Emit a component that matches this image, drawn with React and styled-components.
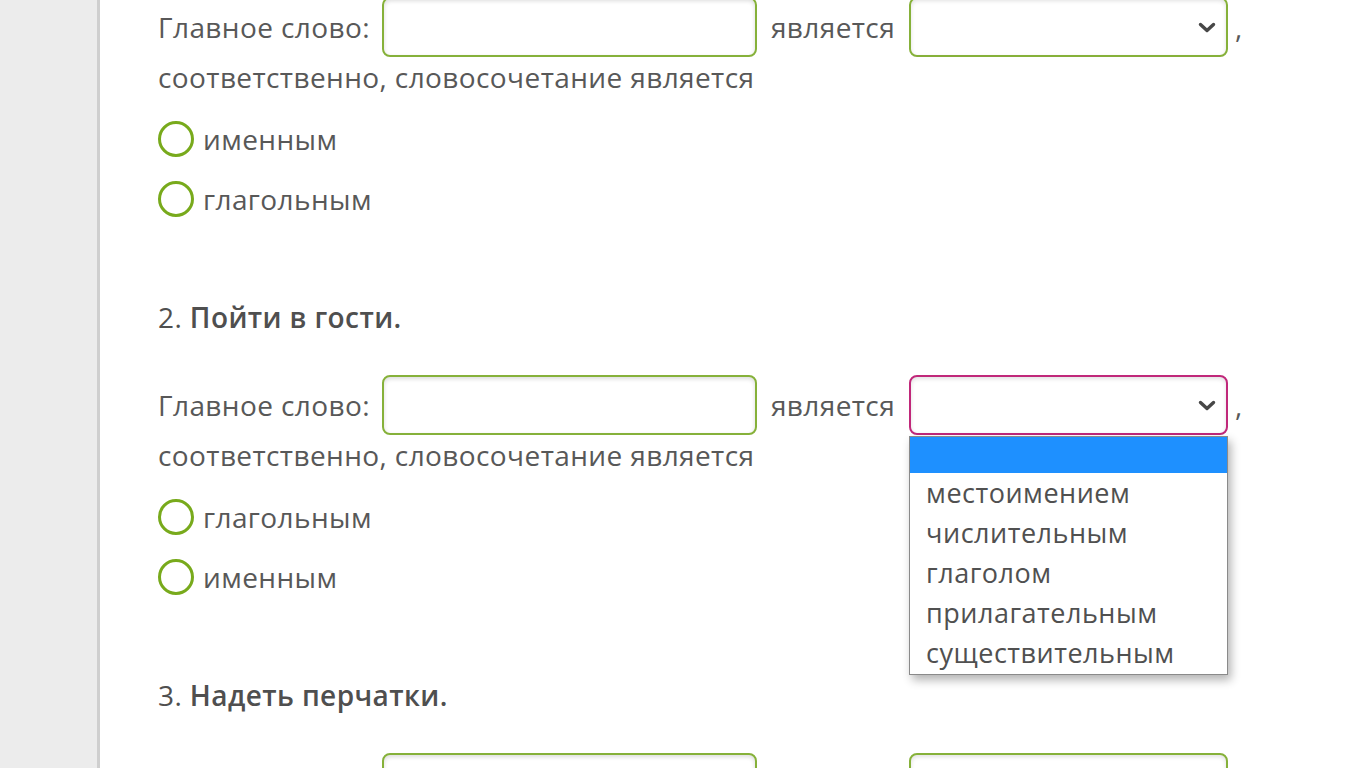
import React from 'react';
import styled, { createGlobalStyle } from 'styled-components';

const GlobalStyle = createGlobalStyle`
  html, body {
    margin: 0;
    padding: 0;
    background: #fff;
  }
  body {
    font-family: "Open Sans", "Liberation Sans", sans-serif;
    color: #585858;
    overflow: hidden;
  }
`;

const Page = styled.div`
  display: flex;
  height: 768px;
  overflow: hidden;
`;

const Sidebar = styled.aside`
  flex: 0 0 97px;
  background: #ececec;
  border-right: 3px solid #cfcfcf;
`;

const Content = styled.main`
  flex: 1;
  padding-left: 58px;
  margin-top: -3px;
  font-size: 28px;
  letter-spacing: 0.4px;
`;

const Task = styled.section`
  & + & {
    margin-top: 78px;
  }
`;

const Heading = styled.h3`
  margin: 0 0 38px;
  font-size: 28px;
  line-height: 40px;
  font-weight: 600;
  color: #4f4f4f;

  span {
    font-weight: 400;
  }
`;

const Sentence = styled.div`
  display: flex;
  align-items: center;
  height: 60px;
  white-space: nowrap;
`;

const Line = styled.div`
  line-height: 40px;
`;

const green = '#86b13a';

const TextField = styled.input`
  box-sizing: border-box;
  flex: 0 0 375px;
  width: 375px;
  height: 60px;
  margin: 0 14px 0 12px;
  border: 2px solid ${green};
  border-radius: 8px;
  box-shadow: inset 0 2px 4px rgba(0, 0, 0, 0.14);
  background: #fff;
  font: inherit;
  outline: none;
`;

const SelectWrap = styled.div`
  position: relative;
  flex: 0 0 auto;
  margin-left: 14px;
  margin-right: 7px;
`;

const SelectBox = styled.div`
  box-sizing: border-box;
  width: 319px;
  height: 60px;
  border: 2px solid ${p => (p.$open ? '#c0287a' : green)};
  border-radius: 8px;
  box-shadow: inset 0 2px 4px rgba(0, 0, 0, 0.12);
  background: #fff;
  display: flex;
  align-items: center;
  justify-content: flex-end;
  padding-right: 10px;
  color: #474747;
`;

const Dropdown = styled.ul`
  position: absolute;
  top: 61px;
  left: 0;
  z-index: 5;
  box-sizing: border-box;
  width: 319px;
  margin: 0;
  padding: 0 0 1px;
  list-style: none;
  background: #fff;
  border: 1px solid #8a8a8a;
  box-shadow: 3px 5px 9px rgba(0, 0, 0, 0.3);
  font-size: 27px;
  letter-spacing: 0.5px;
`;

const Option = styled.li`
  height: ${p => (p.$active ? '36px' : '40px')};
  line-height: 40px;
  padding-left: 16px;
  background: ${p => (p.$active ? '#1e90ff' : '#fff')};
  color: #505050;
`;

const Radios = styled.div`
  margin-top: 22px;
  display: flex;
  flex-direction: column;
  gap: 20px;
`;

const RadioRow = styled.label`
  display: flex;
  align-items: center;
  height: 40px;
  gap: 9px;
`;

const RadioCircle = styled.span`
  box-sizing: border-box;
  width: 36px;
  height: 36px;
  border-radius: 50%;
  border: 3px solid #78aa1c;
  background: #fff;
`;

const Chevron = () => (
  <svg width="18" height="11" viewBox="0 0 18 11">
    <path d="M2.5 2.5 L9 8.5 L15.5 2.5" fill="none" stroke="currentColor" strokeWidth="3.4" strokeLinecap="round" strokeLinejoin="round" />
  </svg>
);

const partsOfSpeech = ['местоимением', 'числительным', 'глаголом', 'прилагательным', 'существительным'];

const Exercise = ({ number, title, open, options }) => (
  <Task>
    {title && (
      <Heading>
        <span>{number}. </span>
        {title}
      </Heading>
    )}
    <Sentence>
      Главное слово:
      <TextField type="text" />
      является
      <SelectWrap>
        <SelectBox $open={open}>
          <Chevron />
        </SelectBox>
        {open && (
          <Dropdown>
            <Option $active />
            {partsOfSpeech.map(p => (
              <Option key={p}>{p}</Option>
            ))}
          </Dropdown>
        )}
      </SelectWrap>
      ,
    </Sentence>
    <Line>соответственно, словосочетание является</Line>
    {options && (
      <Radios>
        {options.map(o => (
          <RadioRow key={o}>
            <RadioCircle />
            {o}
          </RadioRow>
        ))}
      </Radios>
    )}
  </Task>
);

export default function App() {
  return (
    <Page>
      <GlobalStyle />
      <Sidebar />
      <Content>
        <Exercise number={1} options={['именным', 'глагольным']} />
        <Exercise number={2} title="Пойти в гости." open options={['глагольным', 'именным']} />
        <Exercise number={3} title="Надеть перчатки." />
      </Content>
    </Page>
  );
}
